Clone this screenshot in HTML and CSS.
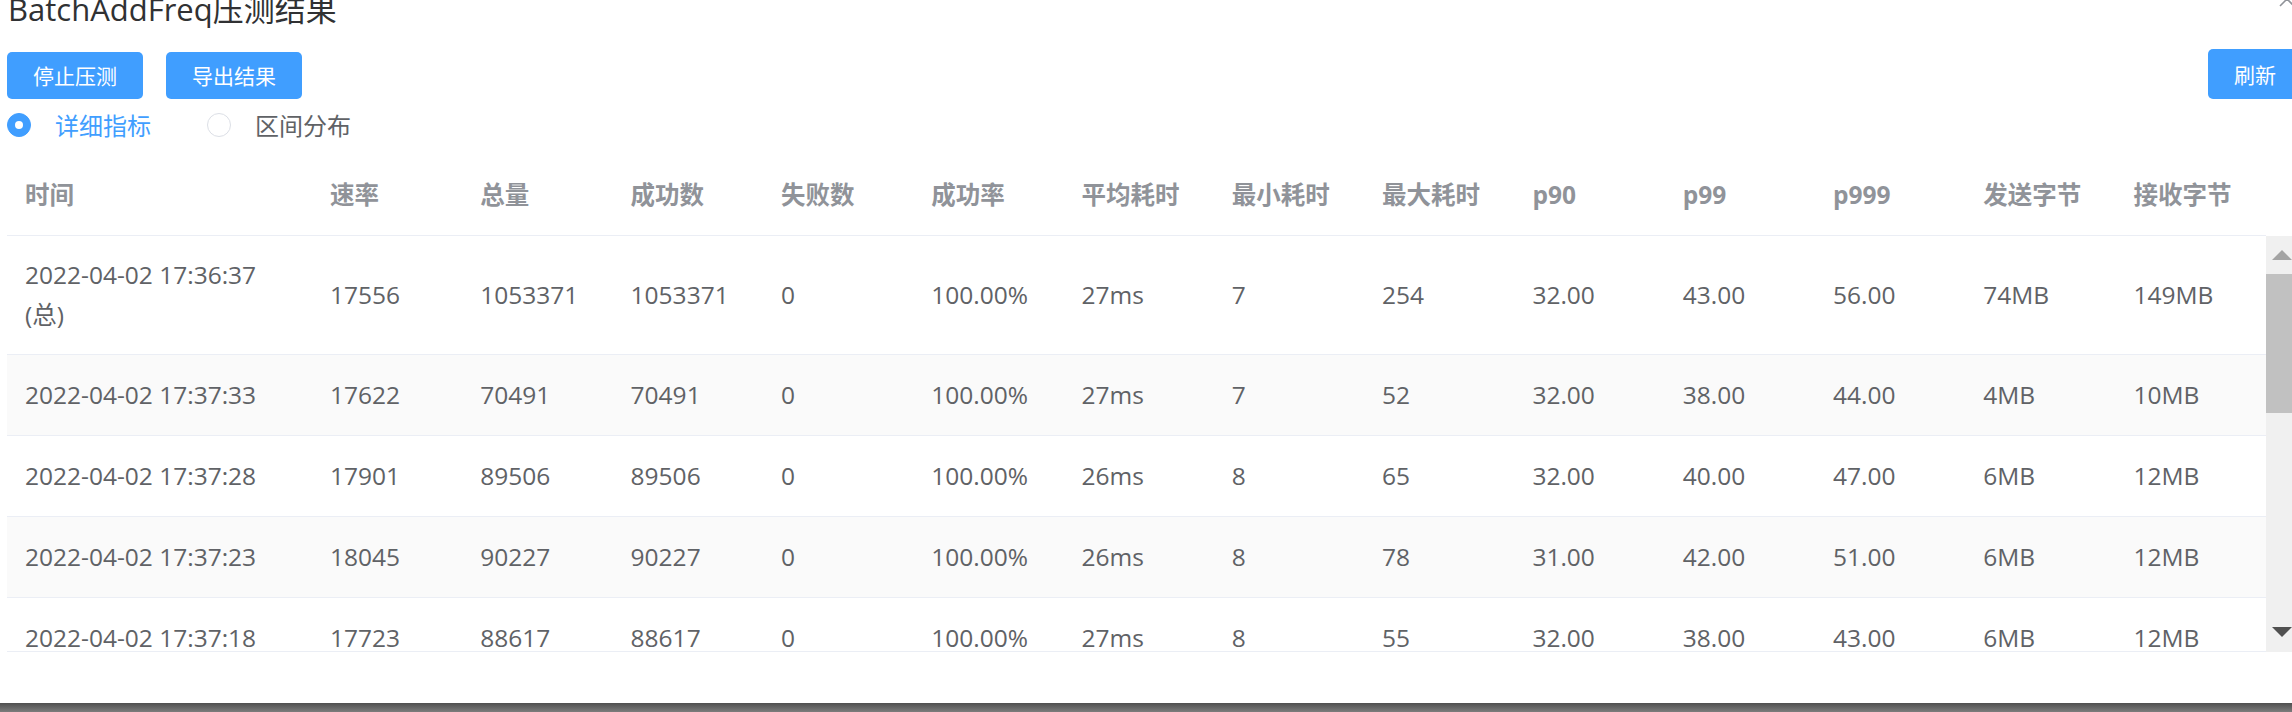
FILE: index.html
```html
<!DOCTYPE html>
<html lang="zh-CN">
<head>
<meta charset="utf-8">
<title>BatchAddFreq压测结果</title>
<link rel="stylesheet" href="styles.css">
</head>
<body>
<div class="dialog">
  <button class="close" aria-label="关闭">
    <svg viewBox="0 0 20 20" width="20" height="20"><path d="M3 3 L17 17 M17 3 L3 17" stroke="#909399" stroke-width="1.6" fill="none"/></svg>
  </button>
  <div class="dialog-header"><span class="title">BatchAddFreq压测结果</span></div>
  <div class="dialog-body">
    <div class="toolbar">
      <div class="toolbar-left">
        <button class="btn">停止压测</button>
        <button class="btn btn-gap">导出结果</button>
      </div>
      <button class="btn btn-refresh">刷新</button>
    </div>
    <div class="radios">
      <label class="radio radio-checked"><span class="radio-dot"></span><span class="radio-label">详细指标</span></label>
      <label class="radio radio-second"><span class="radio-dot"></span><span class="radio-label">区间分布</span></label>
    </div>
    <div class="grid">
      <table class="thead">
        <colgroup><col class="col-time"><col><col><col><col><col><col><col><col><col><col><col><col><col></colgroup>
        <tr>
          <th>时间</th><th>速率</th><th>总量</th><th>成功数</th><th>失败数</th><th>成功率</th><th>平均耗时</th><th>最小耗时</th><th>最大耗时</th><th>p90</th><th>p99</th><th>p999</th><th>发送字节</th><th>接收字节</th>
        </tr>
      </table>
      <div class="body-wrap">
        <div class="body-scroll">
          <table class="tbody">
            <colgroup><col class="col-time"><col><col><col><col><col><col><col><col><col><col><col><col><col></colgroup>
            <tr class="row-total">
              <td>2022-04-02 17:36:37<br>(总)</td><td>17556</td><td>1053371</td><td>1053371</td><td>0</td><td>100.00%</td><td>27ms</td><td>7</td><td>254</td><td>32.00</td><td>43.00</td><td>56.00</td><td>74MB</td><td>149MB</td>
            </tr>
            <tr class="row-stripe">
              <td>2022-04-02 17:37:33</td><td>17622</td><td>70491</td><td>70491</td><td>0</td><td>100.00%</td><td>27ms</td><td>7</td><td>52</td><td>32.00</td><td>38.00</td><td>44.00</td><td>4MB</td><td>10MB</td>
            </tr>
            <tr>
              <td>2022-04-02 17:37:28</td><td>17901</td><td>89506</td><td>89506</td><td>0</td><td>100.00%</td><td>26ms</td><td>8</td><td>65</td><td>32.00</td><td>40.00</td><td>47.00</td><td>6MB</td><td>12MB</td>
            </tr>
            <tr class="row-stripe">
              <td>2022-04-02 17:37:23</td><td>18045</td><td>90227</td><td>90227</td><td>0</td><td>100.00%</td><td>26ms</td><td>8</td><td>78</td><td>31.00</td><td>42.00</td><td>51.00</td><td>6MB</td><td>12MB</td>
            </tr>
            <tr>
              <td>2022-04-02 17:37:18</td><td>17723</td><td>88617</td><td>88617</td><td>0</td><td>100.00%</td><td>27ms</td><td>8</td><td>55</td><td>32.00</td><td>38.00</td><td>43.00</td><td>6MB</td><td>12MB</td>
            </tr>
          </table>
        </div>
        <div class="scrollbar">
          <div class="sb-btn sb-up"><svg viewBox="0 0 20 10" width="20" height="10"><path d="M10 0 L20 10 L0 10 Z" fill="#a3a3a3"/></svg></div>
          <div class="sb-thumb"></div>
          <div class="sb-track"></div>
          <div class="sb-btn sb-down"><svg viewBox="0 0 20 10" width="20" height="10"><path d="M0 0 L20 0 L10 10 Z" fill="#505050"/></svg></div>
        </div>
      </div>
    </div>
  </div>
</div>
<div class="taskbar"></div>
</body>
</html>
```
FILE: styles.css
```css
html, body {
  margin: 0;
  padding: 0;
}
body {
  width: 2292px;
  height: 712px;
  overflow: hidden;
  background: #fff;
  font-family: "Open Sans", "Noto Sans CJK SC", sans-serif;
}
.dialog {
  position: relative;
  height: 703px;
  background: #fff;
  display: flex;
  flex-direction: column;
}
.close {
  position: absolute;
  right: -5px;
  top: -11px;
  width: 20px;
  height: 20px;
  padding: 0;
  border: none;
  background: transparent;
}
.close svg { display: block; }
.dialog-header {
  margin-top: -9px;
  padding-left: 8px;
  height: 36px;
}
.title {
  font-size: 31px;
  line-height: 36px;
  color: #303133;
  white-space: nowrap;
}
.dialog-body {
  padding-left: 7px;
}
.toolbar {
  margin-top: 22px;
  margin-right: -10px;
  display: flex;
  justify-content: space-between;
  align-items: flex-end;
}
.toolbar-left {
  display: flex;
}
.btn {
  height: 47px;
  padding: 0 26px;
  border: none;
  border-radius: 5px;
  background: #409eff;
  color: #fff;
  font-family: "Noto Sans CJK SC", sans-serif;
  font-size: 21px;
  line-height: 47px;
}
.btn-gap { margin-left: 23px; }
.btn-refresh { height: 50px; line-height: 50px; }
.radios {
  margin-top: 12px;
  height: 27px;
  display: flex;
  align-items: center;
}
.radio {
  display: flex;
  align-items: center;
}
.radio-second { margin-left: 56px; }
.radio-dot {
  width: 24px;
  height: 24px;
  box-sizing: border-box;
  border-radius: 50%;
  border: 1.5px solid #dcdfe6;
  background: #fff;
  position: relative;
}
.radio-checked .radio-dot {
  background: #409eff;
  border-color: #409eff;
}
.radio-checked .radio-dot::after {
  content: "";
  position: absolute;
  left: 50%;
  top: 50%;
  width: 8px;
  height: 8px;
  margin: -4px 0 0 -4px;
  border-radius: 50%;
  background: #fff;
}
.radio-label {
  margin-left: 24px;
  font-family: "Noto Sans CJK SC", sans-serif;
  font-size: 24px;
  line-height: 27px;
  color: #606266;
}
.radio-checked .radio-label { color: #409eff; }
.grid {
  margin-top: 17px;
}
table {
  width: 2259px;
  table-layout: fixed;
  border-collapse: separate;
  border-spacing: 0;
  font-size: 24.5px;
}
.col-time { width: 305px; }
th, td {
  padding: 20px 18px;
  line-height: 40px;
  text-align: left;
  border-bottom: 1px solid #ebeef5;
  white-space: nowrap;
}
th {
  color: #909399;
  font-weight: bold;
}
td { color: #606266; }
.row-total td { padding-top: 19px; padding-bottom: 19px; }
.row-stripe td { background: #fafafa; }
.body-wrap {
  display: flex;
  height: 416px;
}
.body-scroll {
  width: 2259px;
  flex-shrink: 0;
  height: 416px;
  box-sizing: border-box;
  overflow: hidden;
  border-bottom: 1px solid #ebeef5;
}
.scrollbar {
  width: 32px;
  flex-shrink: 0;
  display: flex;
  flex-direction: column;
  background: #f0f0f0;
}
.sb-btn {
  height: 38px;
  display: flex;
  align-items: center;
  justify-content: center;
  flex-shrink: 0;
}
.sb-btn svg { display: block; }
.sb-up { align-items: flex-start; padding-top: 14px; box-sizing: border-box; }
.sb-down { align-items: flex-start; padding-top: 13px; box-sizing: border-box; }
.sb-thumb {
  height: 139px;
  background: #c1c1c1;
  flex-shrink: 0;
}
.sb-track { flex: 1; }
.taskbar {
  height: 9px;
  background: linear-gradient(to bottom, #4f4f4f, #7c7c7c);
}
```
